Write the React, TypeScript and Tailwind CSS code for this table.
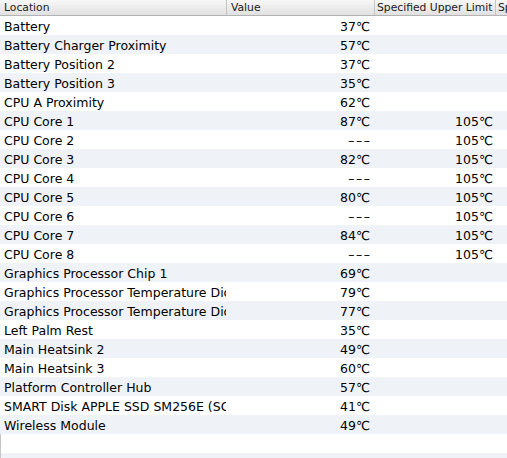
const ROWS: [string, string, string][] = [
  ["Battery", "37℃", ""],
  ["Battery Charger Proximity", "57℃", ""],
  ["Battery Position 2", "37℃", ""],
  ["Battery Position 3", "35℃", ""],
  ["CPU A Proximity", "62℃", ""],
  ["CPU Core 1", "87℃", "105℃"],
  ["CPU Core 2", "---", "105℃"],
  ["CPU Core 3", "82℃", "105℃"],
  ["CPU Core 4", "---", "105℃"],
  ["CPU Core 5", "80℃", "105℃"],
  ["CPU Core 6", "---", "105℃"],
  ["CPU Core 7", "84℃", "105℃"],
  ["CPU Core 8", "---", "105℃"],
  ["Graphics Processor Chip 1", "69℃", ""],
  ["Graphics Processor Temperature Diode 1", "79℃", ""],
  ["Graphics Processor Temperature Diode 2", "77℃", ""],
  ["Left Palm Rest", "35℃", ""],
  ["Main Heatsink 2", "49℃", ""],
  ["Main Heatsink 3", "60℃", ""],
  ["Platform Controller Hub", "57℃", ""],
  ["SMART Disk APPLE SSD SM256E (SCSI)", "41℃", ""],
  ["Wireless Module", "49℃", ""],
];

const COLS = "grid grid-cols-[226px_148px_121px_1fr]";

export default function App() {
  // pad with empty rows so the striping fills the window
  const filler = [0, 1];

  return (
    <div className="h-[458px] w-[507px] overflow-hidden bg-white font-['Lucida_Grande','DejaVu_Sans',sans-serif] text-black">
      {/* ── header ── */}
      <div className={`${COLS} h-4 border-b border-[#b3b3b3] bg-gradient-to-b from-[#f7f7f7] to-[#e1e1e1] text-[10.75px] leading-[15px] text-[#1a1a1a]`}>
        <div className="overflow-hidden whitespace-nowrap pl-[4px]">Location</div>
        <div className="overflow-hidden whitespace-nowrap border-l border-[#c4c4c4] pl-[4px]">Value</div>
        <div className="overflow-hidden whitespace-nowrap border-l border-[#c4c4c4] pl-[2px]">Specified Upper Limit</div>
        <div className="overflow-hidden whitespace-nowrap border-l border-[#c4c4c4] pl-[2px]">Specified Lower Limit</div>
      </div>

      {/* ── rows ── */}
      {ROWS.map(([loc, val, limit], i) => (
        <div
          key={loc}
          className={`${COLS} h-[19px] pt-[2px] text-[12.5px] leading-[17px] ${i % 2 === 1 ? "bg-[#eff3f8]" : "bg-white"}`}
        >
          <div className="overflow-hidden whitespace-nowrap pl-[4px]">{loc}</div>
          <div className="overflow-hidden whitespace-nowrap pr-[4px] text-right">
            {val === "---" ? <span className="mr-[-1.5px] tracking-[1.5px]">–––</span> : val}
          </div>
          <div className="overflow-hidden whitespace-nowrap pr-[2px] text-right">{limit}</div>
          <div />
        </div>
      ))}

      {filler.map((n) => (
        <div key={n} className={`h-[19px] border-l border-[#c6c6c6] ${n % 2 === 1 ? "bg-[#eff3f8]" : "bg-white"}`} />
      ))}
    </div>
  );
}
